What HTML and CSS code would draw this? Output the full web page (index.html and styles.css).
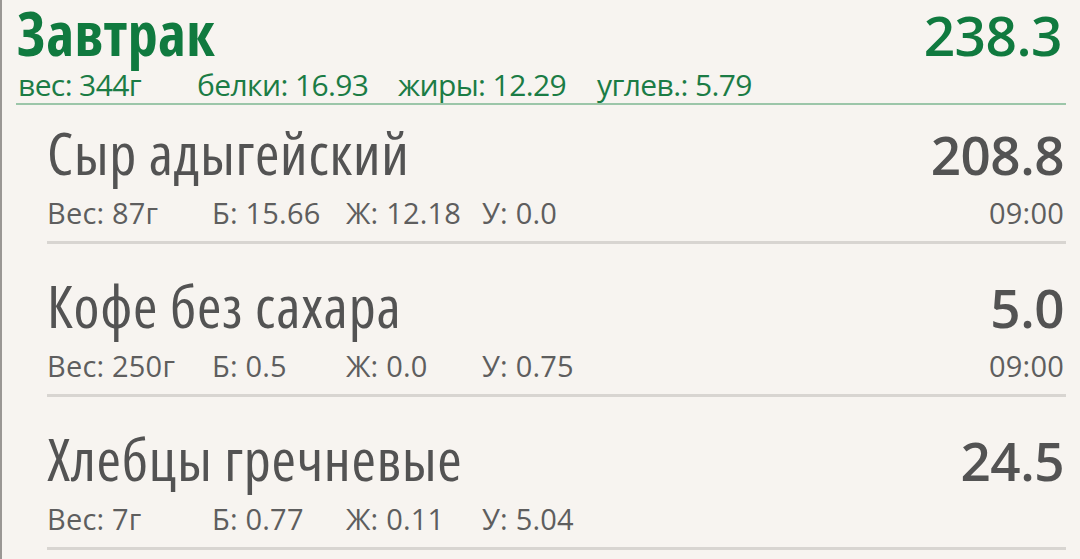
FILE: index.html
```html
<!DOCTYPE html>
<html lang="ru">
<head>
<meta charset="utf-8">
<title>Завтрак</title>
<link rel="stylesheet" href="styles.css">
</head>
<body>
<main class="screen">
  <section class="meal">
    <header class="meal-head">
      <div class="meal-title-row">
        <h1 class="meal-title">Завтрак</h1>
        <div class="meal-kcal">238.3</div>
      </div>
      <div class="meal-stats">
        <span>вес: 344г</span>
        <span>белки: 16.93</span>
        <span>жиры: 12.29</span>
        <span>углев.: 5.79</span>
      </div>
    </header>
    <ul class="items">
      <li class="item">
        <div class="item-row">
          <span class="item-name">Сыр адыгейский</span>
          <span class="item-kcal">208.8</span>
        </div>
        <div class="item-stats">
          <span>Вес: 87г</span>
          <span>Б: 15.66</span>
          <span>Ж: 12.18</span>
          <span>У: 0.0</span>
          <span class="item-time">09:00</span>
        </div>
      </li>
      <li class="item">
        <div class="item-row">
          <span class="item-name">Кофе без сахара</span>
          <span class="item-kcal">5.0</span>
        </div>
        <div class="item-stats">
          <span>Вес: 250г</span>
          <span>Б: 0.5</span>
          <span>Ж: 0.0</span>
          <span>У: 0.75</span>
          <span class="item-time">09:00</span>
        </div>
      </li>
      <li class="item">
        <div class="item-row">
          <span class="item-name">Хлебцы гречневые</span>
          <span class="item-kcal">24.5</span>
        </div>
        <div class="item-stats">
          <span>Вес: 7г</span>
          <span>Б: 0.77</span>
          <span>Ж: 0.11</span>
          <span>У: 5.04</span>
          <span class="item-time"></span>
        </div>
      </li>
    </ul>
  </section>
</main>
</body>
</html>
```
FILE: styles.css
```css
html, body {
  margin: 0;
  padding: 0;
  height: 100%;
  overflow: hidden;
}
body {
  background: #f7f4f0;
  font-family: "Open Sans", "Roboto", "DejaVu Sans", sans-serif;
  color: #555;
}
.screen {
  min-height: 100%;
  border-left: 2px solid #9a9794;
  box-sizing: border-box;
}
.meal-head {
  margin: 0 14px 0 14px;
  padding-top: 2px;
  border-bottom: 2px solid #9cc6a9;
}
.meal-title-row {
  display: flex;
  justify-content: space-between;
  align-items: baseline;
  padding: 0 4px 0 1px;
  height: 62px;
}
.meal-title {
  margin: 0;
  font-size: 60px;
  font-weight: 700;
  font-stretch: 75%;
  letter-spacing: 0.3px;
  line-height: 62px;
  color: #107a3f;
}
.meal-kcal {
  font-size: 55px;
  font-weight: 600;
  line-height: 62px;
  color: #107a3f;
  letter-spacing: -0.5px;
}
.meal-stats {
  display: grid;
  grid-template-columns: 179px 201px 199px auto;
  padding-left: 2px;
  margin-top: 3px;
  font-size: 30px;
  line-height: 36px;
  color: #1b7c45;
  letter-spacing: -0.6px;
}
.items {
  list-style: none;
  margin: 0 14px 0 45px;
  padding: 0;
}
.item {
  padding: 31px 0 11px 0;
  border-bottom: 3px solid #d8d5d1;
}
.item:first-child {
  padding-top: 17px;
}
.item-row {
  display: flex;
  justify-content: space-between;
  align-items: baseline;
  height: 60px;
  padding-right: 2px;
}
.item-name {
  font-size: 59px;
  font-stretch: 75%;
  letter-spacing: 0.8px;
  line-height: 60px;
  color: #535353;
}
.item-kcal {
  font-size: 53px;
  font-weight: 600;
  line-height: 60px;
  color: #535353;
  letter-spacing: -0.5px;
}
.item-stats {
  display: grid;
  grid-template-columns: 165px 134px 136px 1fr auto;
  margin-top: 14px;
  padding-right: 2px;
  font-size: 29px;
  line-height: 34px;
  color: #5e5e5e;
  letter-spacing: 0.2px;
}
.item-time {
  text-align: right;
}
```
